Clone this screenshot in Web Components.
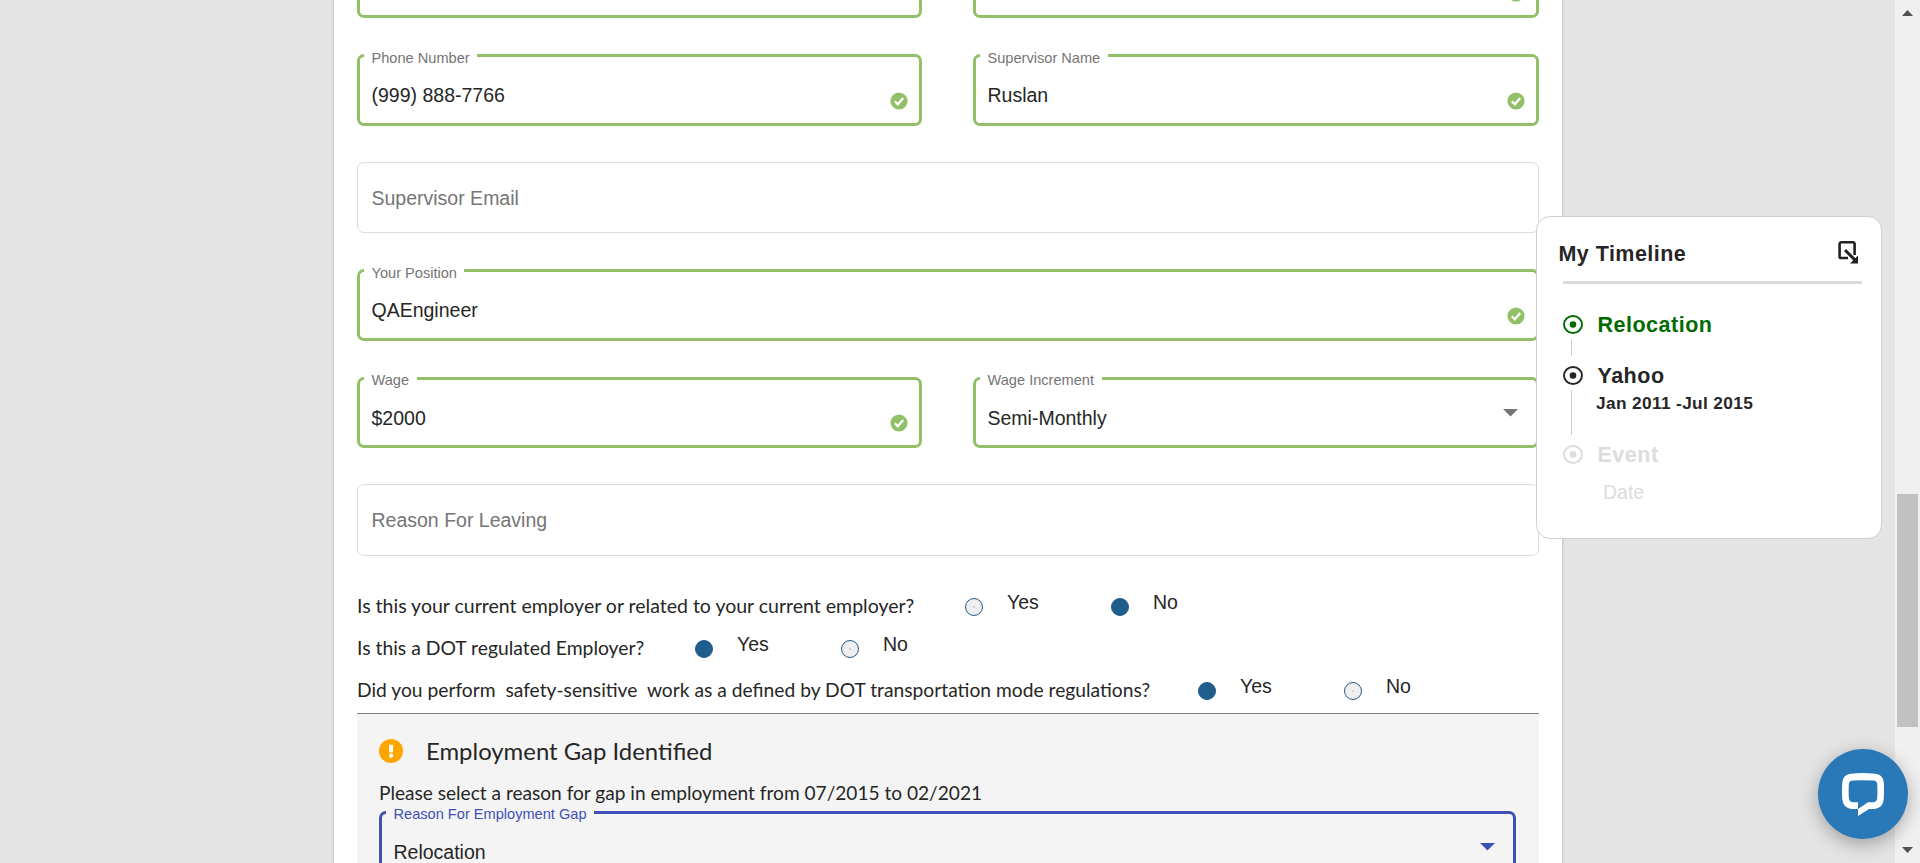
<!DOCTYPE html>
<html lang="en">
<head>
<meta charset="utf-8">
<title>Employment History</title>
<style>
html,body{margin:0;height:863px;overflow:hidden;background:#e4e4e4;color:#262626;font-family:"Liberation Sans",Arial,sans-serif}
</style>
</head>
<body>
<app-page></app-page>
<script>
const define=(name,html)=>customElements.define(name,class extends HTMLElement{
  constructor(){super();this.attachShadow({mode:'open'});}
  connectedCallback(){
    const t=document.createElement('template');
    t.innerHTML=typeof html==='function'?html(this):html;
    this.shadowRoot.replaceChildren(t.content.cloneNode(true));
  }
});

/* Outlined text field: states are valid, focused and empty */
define('form-field',el=>{
  const label=el.getAttribute('label')||'',state=el.getAttribute('state')||'',icon=el.getAttribute('icon');
  const check='<svg class="check" viewBox="0 0 18 18" width="18" height="18"><circle cx="9" cy="9" r="8.6" fill="#92c069"/><path d="M4.800 9.300l3 3 5.400-6.300" fill="none" stroke="#fff" stroke-width="2.300"/></svg>';
  const arrow='<svg class="arrow" viewBox="0 0 15 8" width="15" height="8"><path d="M0 0h15L7.5 7.500z" fill="currentColor"/></svg>';
  return `<style>
  :host{display:block;--line:#92c069;--lab:#757575;height:71.75px;min-width:0}
  :host([state=focused]){--line:#3f51b5;--lab:#3f51b5}
  .wrap{position:relative;height:100%}
  fieldset{position:absolute;inset:-8px 0 0 0;margin:0;padding:0 0 0 4px;border:3px solid var(--line);border-radius:7px;min-width:0}
  legend{padding:0 7.500px;height:19px;font-size:14.600px;line-height:var(--ll,24px);color:var(--lab);white-space:nowrap}
  .box{position:absolute;inset:0;border:1px solid #dcdcdc;border-radius:7px}
  .row{position:relative;display:flex;align-items:center;height:100%;padding:0 18px 0 14.500px;box-sizing:border-box;font-size:19.500px}
  .val{flex:1;margin-top:11.500px;white-space:nowrap}
  .empty .val{color:#757575;margin-top:2px}
  .check{margin-top:22px;margin-right:-3.500px}
  .arrow{color:#757575;margin:1px 3px 0 0}
  :host([state=focused]) .arrow{color:#3f51b5;margin-right:3px}
  </style><div class="wrap ${state}">${state==='empty'?'<div class="box"></div>':`<fieldset>${label?`<legend>${label}</legend>`:''}</fieldset>`}
  <div class="row"><span class="val"><slot></slot></span>${icon==='check'?check:icon==='arrow'?arrow:''}</div></div>`;
});

define('radio-option',el=>`<style>
  :host{display:flex;align-items:center;width:146px;height:42px}
  i{box-sizing:border-box;width:18px;height:18px;border:1px solid #1f5d8c;border-radius:50%;background:${el.hasAttribute('checked')?'#1f5d8c':'radial-gradient(circle,#b9c8d4 0 .6px,#efefef .9px)'};margin-right:24px;flex:none}
  span{font-size:19.500px;margin-top:-9px}
  </style><i></i><span><slot></slot></span>`);

define('question-row',el=>`<style>
  :host{display:flex;align-items:center;height:42px;font-family:Lato,"Liberation Sans",sans-serif;white-space:pre}
  .q{width:var(--q);font-size:var(--fs,19.500px);margin-top:-2px;flex:none}
  radio-option{font-family:"Liberation Sans",Arial,sans-serif}
  </style><span class="q"><slot></slot></span><radio-option ${el.getAttribute('answer')==='yes'?'checked':''}>Yes</radio-option><radio-option ${el.getAttribute('answer')==='no'?'checked':''}>No</radio-option>`);

define('gap-panel',`<style>
  :host{display:block;box-sizing:border-box;height:200px;border-top:1px solid #808080;background:#f4f4f4;padding:24px 23px 0 22px;font-family:Lato,"Liberation Sans",sans-serif}
  .head{display:flex;align-items:center;gap:23px;height:26px;font-size:23.900px}
  p{margin:13px 0 0;height:34px;line-height:31px;font-size:19.100px;white-space:nowrap}
  form-field{font-family:"Liberation Sans",Arial,sans-serif;--ll:22px}
  </style><div class="head"><svg width="24" height="24" viewBox="0 0 24 24"><circle cx="12" cy="12" r="12" fill="#ffa500"/><path d="M10 5.800h4.200l-.3 7.600h-3.600z" fill="#fff"/><circle cx="12.100" cy="16.700" r="2.100" fill="#fff"/></svg><span>Employment Gap Identified</span></div>
  <p>Please select a reason for gap in employment from 07/2015 to 02/2021</p>
  <form-field state="focused" label="Reason For Employment Gap" icon="arrow">Relocation</form-field>`);

define('timeline-item',el=>{
  const h=el.getAttribute('line');
  return `<style>
  :host{display:grid;grid-template-columns:34.500px 1fr;height:var(--h)}
  .mark{display:flex;flex-direction:column;align-items:flex-start}
  .mark i{width:1px;height:${h||0}px;background:#cfcfcf;margin:5px 0 0 8px}
  .t{font-weight:700;font-size:21.500px;line-height:24px;letter-spacing:.5px;margin-top:-1px}
  </style><div class="mark"><svg width="20" height="20" viewBox="0 0 20 20"><ellipse cx="10" cy="10.500" rx="9" ry="8.500" fill="none" stroke="currentColor" stroke-width="1.900"/><circle cx="10" cy="10.500" r="3.300" fill="currentColor"/></svg>${h?'<i></i>':''}</div><div><div class="t">${el.getAttribute('name')}</div><slot></slot></div>`;
});

define('timeline-card',`<style>
  :host{display:block;box-sizing:border-box;width:346px;height:323px;border:1px solid #d0d0d0;border-radius:14px;background:#fff;padding:22px 19px 0 21.500px}
  header{display:flex;justify-content:space-between;height:42px}
  h2{margin:1px 0 0;font-size:21.500px;line-height:28px;letter-spacing:.45px}
  header svg{margin:1px 3px 0 0}
  hr{margin:0 0 30px 4px;border:0;height:3px;background:#dadada}
  .items{padding-left:4.500px}
  .d{font-size:17.300px;font-weight:700;letter-spacing:.35px;line-height:22px;margin:4px 0 0 -1.500px;white-space:nowrap}
  .e{font-size:19.500px;line-height:24px;margin:13px 0 0 5.500px}
  </style><header><h2>My Timeline</h2><svg width="22" height="24" viewBox="0 0 22 24" fill="none" stroke="#212121" stroke-width="2.600"><path d="M11 18H4.200A1.600 1.600 0 0 1 2.600 16.400V4A1.600 1.600 0 0 1 4.200 2.300H16A1.600 1.600 0 0 1 17.600 4v11"/><path d="M8 10l11 11" stroke-width="3"/><path d="M21 15.500v8h-8z" fill="#212121" stroke="none"/></svg></header><hr>
  <div class="items">
  <timeline-item name="Relocation" line="17" style="--h:51px;color:#006b00"></timeline-item>
  <timeline-item name="Yahoo" line="45" style="--h:79px"><div class="d">Jan 2011 -Jul 2015</div></timeline-item>
  <timeline-item name="Event" style="--h:60px;color:#dcdcdc"><div class="e">Date</div></timeline-item></div>`);

define('chat-button',`<style>
  :host{display:flex;align-items:center;justify-content:center;width:90px;height:90px;border-radius:50%;background:#2979b9;box-shadow:0 5px 18px rgba(0,0,0,.3)}
  </style><svg width="42" height="43" viewBox="0 0 42 43"><path fill="#fff" fill-rule="evenodd" d="M9 .8Q21-.6 33 .8Q41 1.500 41.800 9.500Q42.300 18 41.700 26.500Q41 35 32.500 36H27L16 43V36H9.500Q1.200 35 .3 26.500Q-.3 18 .3 9.500Q1 1.500 9 .8ZM11 7.500Q7 7.700 6.900 11Q6.400 18 6.900 25Q7.100 29 11 29.300H16V36L26 29.300H31Q35 29 35.200 25Q35.700 18 35.200 11Q35 7.700 31 7.500Q21 6.800 11 7.500Z"/></svg>`);

define('scroll-bar',`<style>
  :host{display:flex;flex-direction:column;align-items:center;width:25px;height:863px;background:#f0f0f0}
  svg{display:block;margin-top:10px;flex:none}
  i{width:21px;height:233px;background:#c1c1c1;margin-top:478px}
  .dn{margin-top:120px}
  </style><svg width="11" height="6"><path d="M5.500 0L11 6H0z" fill="#505050"/></svg><i></i><svg class="dn" width="11" height="6"><path d="M0 0h11L5.500 6z" fill="#505050"/></svg>`);

define('employment-form',`<style>
  :host{display:block;box-sizing:border-box;width:1228px;height:863px;overflow:hidden;background:#fff;padding:0 23px;box-shadow:0 0 2px 1px #c4c4c4}
  .fields{display:grid;grid-template-columns:565px 566px;column-gap:51px;row-gap:35.750px;margin-top:-53.500px}
  .wide{grid-column:1/3}
  .low{--ll:22px}
  .qs{margin-top:30px}
  gap-panel{margin-top:1px}
  </style><div class="fields">
  <form-field></form-field><form-field icon="check"></form-field>
  <form-field label="Phone Number" icon="check">(999) 888-7766</form-field><form-field label="Supervisor Name" icon="check">Ruslan</form-field>
  <form-field class="wide" state="empty">Supervisor Email</form-field>
  <form-field class="wide" label="Your Position" icon="check">QAEngineer</form-field>
  <form-field class="low" label="Wage" icon="check">$2000</form-field><form-field class="low" label="Wage Increment" icon="arrow">Semi-Monthly</form-field>
  <form-field class="wide" state="empty">Reason For Leaving</form-field></div>
  <div class="qs">
  <question-row answer="no" style="--q:608px">Is this your current employer or related to your current employer?</question-row>
  <question-row answer="yes" style="--q:338px;--fs:19.350px">Is this a DOT regulated Employer?</question-row>
  <question-row answer="yes" style="--q:841px;--fs:19.240px">Did you perform  safety-sensitive  work as a defined by DOT transportation mode regulations?</question-row></div>
  <gap-panel></gap-panel>`);

define('app-page',`<style>
  :host{display:flex;justify-content:space-between;height:863px;padding-left:334px;position:relative}
  timeline-card{position:absolute;left:1536px;top:216px}
  chat-button{position:absolute;left:1818px;top:749px}
  </style><employment-form></employment-form><scroll-bar></scroll-bar><timeline-card></timeline-card><chat-button></chat-button>`);
</script>
</body>
</html>
